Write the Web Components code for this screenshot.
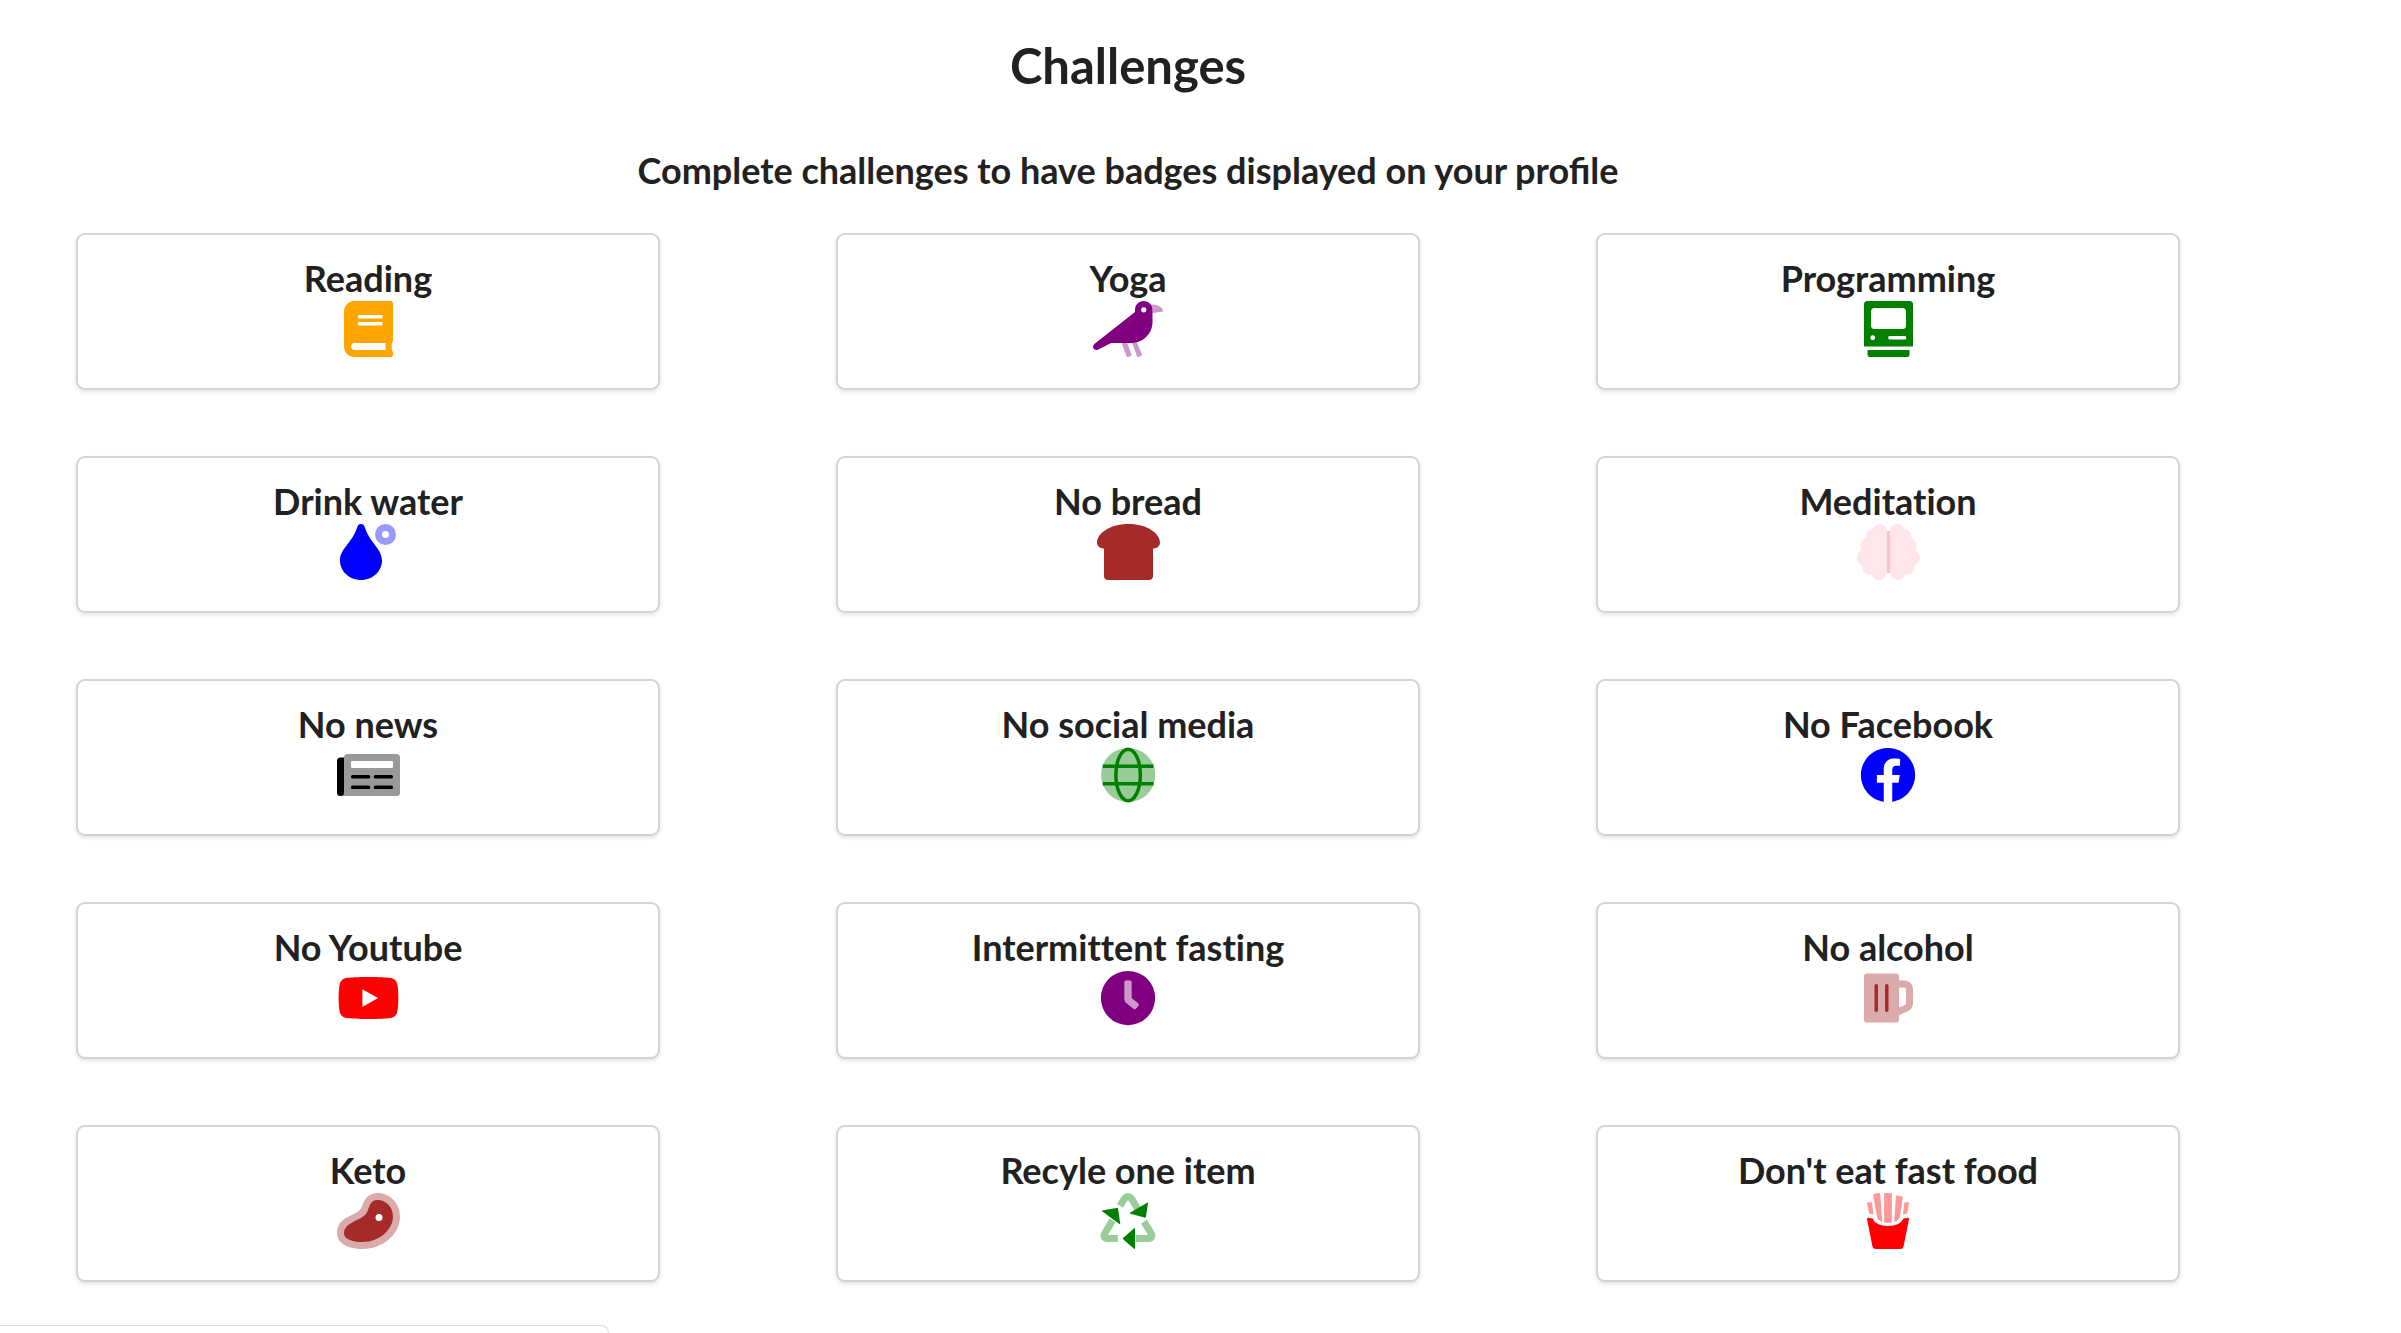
<!DOCTYPE html>
<html lang="en">
<head>
<meta charset="utf-8">
<title>Challenges</title>
<style>
  body { margin: 0; background: #fff; color: #212121; font-family: Lato, "Liberation Sans", sans-serif; }
</style>
</head>
<body>
<challenges-page></challenges-page>
<script>
const ICONS = {
  book: [448, 'orange', '<path d="M448 360V24c0-13.300-10.700-24-24-24H96C43 0 0 43 0 96v320c0 53 43 96 96 96h328c13.300 0 24-10.700 24-24v-16c0-7.500-3.500-14.300-8.900-18.700-4.200-15.400-4.200-59.300 0-74.700 5.400-4.300 8.900-11.100 8.900-18.600zM128 134c0-3.300 2.700-6 6-6h212c3.300 0 6 2.700 6 6v20c0 3.300-2.700 6-6 6H134c-3.300 0-6-2.700-6-6zm0 64c0-3.300 2.700-6 6-6h212c3.300 0 6 2.700 6 6v20c0 3.300-2.700 6-6 6H134c-3.300 0-6-2.700-6-6zm253.400 250H96c-17.700 0-32-14.300-32-32 0-17.600 14.400-32 32-32h285.400c-1.900 17.100-1.900 46.900 0 64z"/>'],
  crow: [640, 'purple', '<path fill-rule="evenodd" d="M464 0c-44.200 0-80 35.800-80 80v21L12.100 393.600A30.200 30.200 0 0 0 0 417.700c0 22.500 23.600 37.100 43.700 27L165.300 384H352c106 0 192-86 192-192V80c0-44.200-35.800-80-80-80zm0 56a24 24 0 1 1 0 48 24 24 0 0 1 0-48z"/><g opacity=".4"><path d="M528 32c10 13 16 30 16 48v32l96-16c0-35-43-64-96-64zM261.800 384l44.400 120.100c2.300 6.200 9.200 9.400 15.400 7.200l22.500-8.200c6.200-2.300 9.500-9.200 7.200-15.400L312.900 384zM357.700 383.700l44.500 120.400c2.300 6.200 9.200 9.400 15.400 7.200l22.500-8.200c6.200-2.300 9.500-9.200 7.200-15.400L401 376c-14 5-28 7-43.300 7.700z"/></g>'],
  computer: [448, 'green', '<path fill-rule="evenodd" d="M32 0h384a32 32 0 0 1 32 32v376a8 8 0 0 1-8 8H8a8 8 0 0 1-8-8V32A32 32 0 0 1 32 0zM96 64a32 32 0 0 0-32 32v128a32 32 0 0 0 32 32h256a32 32 0 0 0 32-32V96a32 32 0 0 0-32-32zM80 314a22 22 0 1 0 0 44 22 22 0 0 0 0-44zM234 320a12 12 0 0 0-12 12v8a12 12 0 0 0 12 12h140a12 12 0 0 0 12-12v-8a12 12 0 0 0-12-12zM32 448h384v44a20 20 0 0 1-20 20H52a20 20 0 0 1-20-20z"/>'],
  drop: [512, 'blue', '<path d="M223.900 22.100c-8.700-28.800-54-30.100-63.800 0C109.100 179.900 0 222.700 0 333.900 0 432.400 85.900 512 192 512s192-79.600 192-178.100c0-111.700-108.800-153.300-160.100-311.800z"/><path opacity=".4" fill-rule="evenodd" d="M416 0a96 96 0 1 1 0 192 96 96 0 0 1 0-192zm0 64a32 32 0 1 0 0 64 32 32 0 0 0 0-64z"/>'],
  bread: [576, 'brown', '<path d="M288 0C108 0 0 93.400 0 169.100 0 199.400 24.200 224 64 224v256c0 17.700 16.100 32 36 32h376c19.900 0 36-14.300 36-32V224c39.800 0 64-24.600 64-54.900C576 93.400 468 0 288 0z"/>'],
  brain: [576, 'pink', '<path opacity=".4" d="M208 0c-29.900 0-54.700 20.500-61.800 48.200-.8 0-1.400-.2-2.200-.2-35.300 0-64 28.700-64 64 0 4.800.6 9.500 1.700 14C52.500 138 32 166.600 32 200c0 12.600 3.200 24.300 8.300 34.900C16.300 248.700 0 274.300 0 304c0 33.300 20.400 61.900 49.400 73.900-.9 4.600-1.400 9.300-1.400 14.100 0 39.800 32.200 72 72 72 4.100 0 8.100-.5 12-1.200 9.600 28.500 36.200 49.200 68 49.200 39.800 0 72-32.200 72-72V64c0-35.300-28.700-64-64-64zM576 304c0-29.700-16.300-55.300-40.300-69.100 5.200-10.600 8.300-22.300 8.300-34.900 0-33.400-20.500-62-49.700-74 1-4.500 1.700-9.200 1.700-14 0-35.300-28.700-64-64-64-.8 0-1.500.2-2.200.2C422.700 20.500 397.900 0 368 0c-35.300 0-64 28.600-64 64v376c0 39.800 32.200 72 72 72 31.800 0 58.400-20.700 68-49.200 3.900.7 7.900 1.200 12 1.200 39.800 0 72-32.200 72-72 0-4.800-.5-9.500-1.400-14.100 29-12 49.400-40.600 49.400-73.900z"/><path d="M272 64h32v384h-32z"/>'],
  news: [576, 'black', '<path opacity=".4" fill-rule="evenodd" d="M96 64h448a32 32 0 0 1 32 32v320a32 32 0 0 1-32 32H32c18 0 32-14 32-32V96a32 32 0 0 1 32-32zm44 64a12 12 0 0 0-12 12v40a12 12 0 0 0 12 12h360a12 12 0 0 0 12-12v-40a12 12 0 0 0-12-12z"/><path d="M64 96v320a32 32 0 0 1-64 0V128a32 32 0 0 1 32-32z"/><rect x="128" y="256" width="176" height="32" rx="14"/><rect x="336" y="256" width="176" height="32" rx="14"/><rect x="128" y="352" width="176" height="32" rx="14"/><rect x="336" y="352" width="176" height="32" rx="14"/>'],
  globe: [496, 'green', '<circle cx="248" cy="256" r="248" opacity=".4"/><g fill="none" stroke="green" stroke-width="32"><ellipse cx="248" cy="256" rx="112" ry="236"/><path d="M16 176h464M16 336h464"/></g>'],
  facebook: [512, 'blue', '<path d="M504 256C504 119 393 8 256 8S8 119 8 256c0 123.800 90.700 226.400 209.300 245V327.700h-63V256h63v-54.600c0-62.200 37-96.500 93.700-96.500 27.100 0 55.500 4.800 55.500 4.800v61h-31.300c-30.800 0-40.400 19.100-40.400 38.700V256h68.800l-11 71.700h-57.800V501C413.300 482.400 504 379.800 504 256z"/>'],
  youtube: [576, 'red', '<path d="M549.700 124.100c-6.300-23.700-24.800-42.300-48.300-48.600C458.800 64 288 64 288 64S117.200 64 74.600 75.500c-23.500 6.300-42 24.900-48.300 48.600-11.400 42.900-11.400 132.300-11.400 132.300s0 89.400 11.400 132.300c6.300 23.700 24.800 41.500 48.300 47.800C117.200 448 288 448 288 448s170.800 0 213.400-11.500c23.500-6.300 42-24.200 48.300-47.800 11.400-42.900 11.400-132.300 11.400-132.300s0-89.400-11.400-132.300zM232.100 337.600V175.200l142.800 81.200z"/>'],
  clock: [512, 'purple', '<path fill-rule="evenodd" d="M256 8a248 248 0 1 1 0 496 248 248 0 0 1 0-496zm-16 88a16 16 0 0 0-16 16v160q0 16 12 26l70 56q14 10 24-3l20-24q10-14-3-24l-59-47V112a16 16 0 0 0-16-16z"/><path opacity=".4" d="M240 96a16 16 0 0 0-16 16v160q0 16 12 26l70 56q14 10 24-3l20-24q10-14-3-24l-59-47V112a16 16 0 0 0-16-16z"/>'],
  beer: [448, 'brown', '<path opacity=".4" d="M368 96h-48V56c0-13.300-10.700-24-24-24H24C10.700 32 0 42.700 0 56v400c0 13.300 10.700 24 24 24h272c13.300 0 24-10.700 24-24v-42.100l80.600-36c28.800-12.800 47.400-41.500 47.400-73V176c0-44.100-35.900-80-80-80zm16 208.900c0 6.300-3.700 12.100-9.500 14.600L320 343.800V160h48c8.800 0 16 7.200 16 16z"/><rect x="96" y="128" width="32" height="256" rx="16"/><rect x="192" y="128" width="32" height="256" rx="16"/>'],
  steak: [576, 'brown', '<path opacity=".4" d="M372 0C280 0 250 60 225 130 195 215 0 200 0 370 0 460 110 512 230 512 430 512 576 370 576 215 576 90 480 0 372 0z"/><path d="M372 64C310 64 300 110 282 160 245 265 64 250 64 370 64 420 140 448 230 448 395 448 512 330 512 215 512 125 445 64 372 64z"/><circle cx="384" cy="224" r="32" fill="white"/>'],
  recycle: [512, 'green', '<g opacity=".4" fill="none" stroke="green" stroke-width="64"><path d="M184 118l32-54q40-62 80 0l60 100M115 250l-72 120q-22 46 36 46h84M402 262l66 108q22 46-36 46H325"/></g><path d="M440 85l-20 132q-2 10-12 8l-131-36q-6-4 0-10zM19 166q0-6 6-8l128-22q10-2 12 8l20 136q0 6-8 4zM320 328v180q-2 6-8 2l-98-86q-8-8 0-16l98-86q6-4 8 6z"/>'],
  fries: [384, 'red', '<path d="M0 240q0-16 20-12l30 6q30 68 142 68t142-68l30-6q20-4 20 12l-50 250q-4 22-28 22H78q-24 0-28-22z"/><path opacity=".4" d="M4 84h34q8 0 9 8l12 104-34-6q-6-1-7-8L0 92q0-8 4-8zM60 12l46-12q12-2 14 8l20 256q-26-6-44-26L56 22q-1-8 4-10zM164 0h56q8 0 8 8v262q-36 4-72 0V8q0-8 8-8zM276 22l44 10q8 2 6 10l-26 186q-20 30-52 36l16-232q2-12 12-10zM348 84h32q5 0 4 8l-16 90q-1 7-7 8l-32 6 12-104q1-8 7-8z"/>']
};

customElements.define('challenge-icon', class extends HTMLElement {
  connectedCallback() {
    const [width, color, art] = ICONS[this.getAttribute('name')];
    this.attachShadow({ mode: 'open' }).innerHTML = `
      <style>
        :host { display: block; height: 56px; }
        svg { display: block; height: 100%; margin: 0 auto; }
      </style>
      <svg viewBox="0 0 ${width} 512" fill="${color}" aria-hidden="true">${art}</svg>`;
  }
});

customElements.define('challenge-card', class extends HTMLElement {
  connectedCallback() {
    this.attachShadow({ mode: 'open' }).innerHTML = `
      <style>
        :host { display: block; box-sizing: border-box; padding: 22px 24px 31px; text-align: center;
          background: #fff; border: 2px solid #d4d4d5; border-radius: 9px; box-shadow: 0 2px 4px rgba(34, 36, 38, .12); }
        h3 { margin: 0 0 2px; font-size: 36px; line-height: 42px; font-weight: 700; font-variant-ligatures: none; }
      </style>
      <h3><slot></slot></h3>
      <challenge-icon name="${this.getAttribute('icon')}"></challenge-icon>`;
  }
});

customElements.define('status-bubble', class extends HTMLElement {
  connectedCallback() {
    this.attachShadow({ mode: 'open' }).innerHTML = `
      <style>
        :host { display: block; position: fixed; left: 0; bottom: 0; box-sizing: border-box; width: 609px; height: 8px;
          background: #fff; border: 1px solid #dadce0; border-width: 1px 1px 0 0; border-radius: 0 8px 0 0; }
      </style>`;
  }
});

customElements.define('challenges-page', class extends HTMLElement {
  connectedCallback() {
    this.attachShadow({ mode: 'open' }).innerHTML = `
      <style>
        :host { display: block; }
        main { padding: 34px 221px 48px 76px; }
        h1, h2 { margin: 0; font-weight: 700; text-align: center; }
        h1 { font-size: 49px; line-height: 62px; }
        h2 { margin-top: 51px; font-size: 36px; line-height: 46px; }
        section { display: grid; grid-template-columns: repeat(3, 1fr); gap: 66px 176px; margin-top: 40px; }
      </style>
      <main>
        <h1>Challenges</h1>
        <h2>Complete challenges to have badges displayed on your profile</h2>
        <section>
          <challenge-card icon="book">Reading</challenge-card>
          <challenge-card icon="crow">Yoga</challenge-card>
          <challenge-card icon="computer">Programming</challenge-card>
          <challenge-card icon="drop">Drink water</challenge-card>
          <challenge-card icon="bread">No bread</challenge-card>
          <challenge-card icon="brain">Meditation</challenge-card>
          <challenge-card icon="news">No news</challenge-card>
          <challenge-card icon="globe">No social media</challenge-card>
          <challenge-card icon="facebook">No Facebook</challenge-card>
          <challenge-card icon="youtube">No Youtube</challenge-card>
          <challenge-card icon="clock">Intermittent fasting</challenge-card>
          <challenge-card icon="beer">No alcohol</challenge-card>
          <challenge-card icon="steak">Keto</challenge-card>
          <challenge-card icon="recycle">Recyle one item</challenge-card>
          <challenge-card icon="fries">Don't eat fast food</challenge-card>
        </section>
      </main>
      <status-bubble></status-bubble>`;
  }
});
</script>
</body>
</html>
